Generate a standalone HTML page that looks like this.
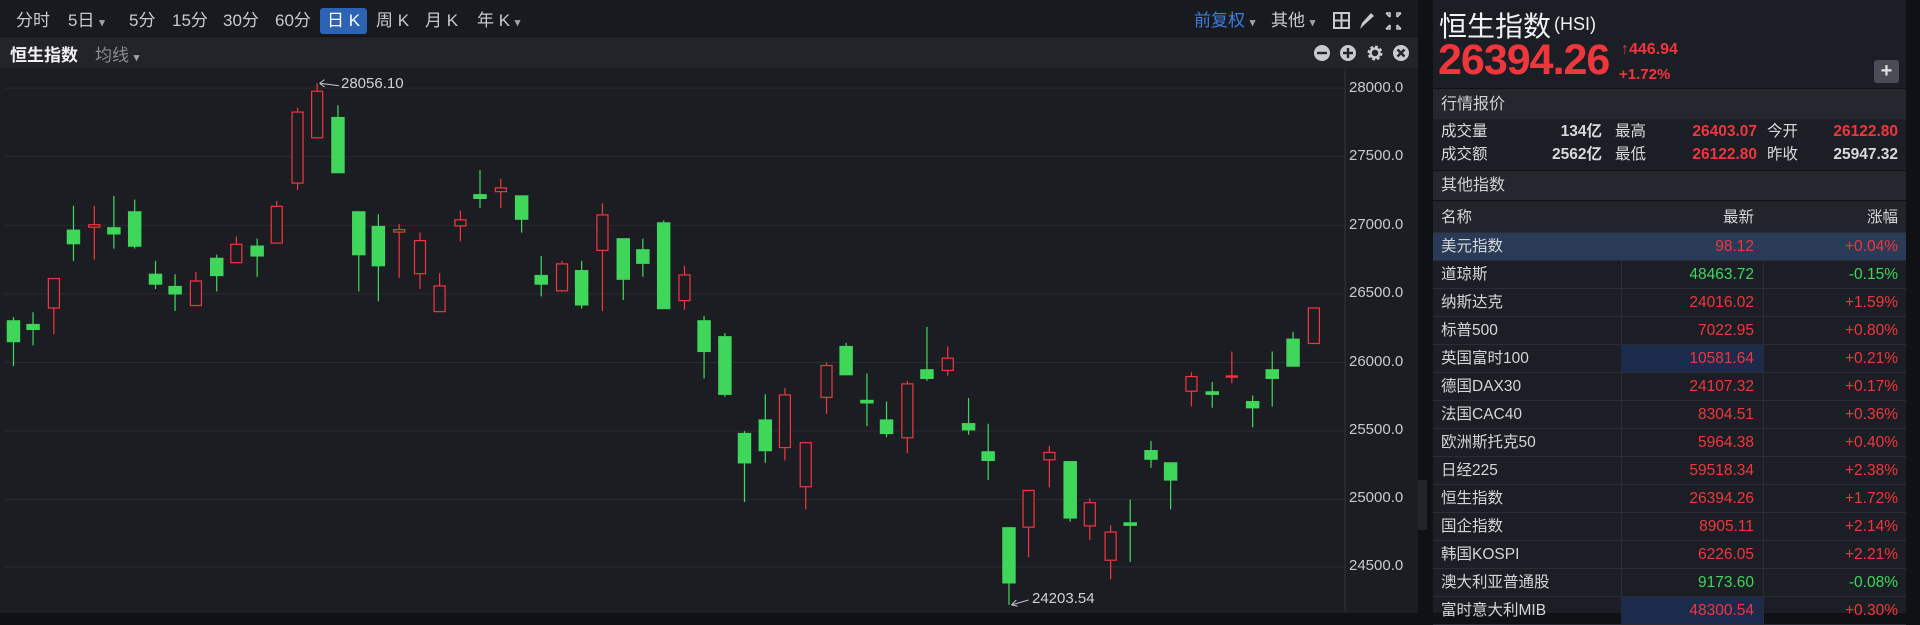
<!DOCTYPE html>
<html><head><meta charset="utf-8"><style>
*{margin:0;padding:0;box-sizing:border-box}
body{width:1920px;height:613px;background:#101114;overflow:hidden;position:relative;font-family:"Liberation Sans","Noto Sans CJK SC",sans-serif;color:#d8d9dc}
.abs{position:absolute}
#left{left:0;top:0;width:1418px;height:613px;background:#1b1d23}
#tb{left:0;top:0;width:1418px;height:37px;background:#191a1f;border-bottom:1px solid #111}
#tb span{position:absolute;top:8px;font-size:17px;color:#c9cace;line-height:26px}
#r2{left:0;top:37px;width:1418px;height:31px;background:#22242a}
.ar{font-size:11px;color:#a0a2a8}
.yl{position:absolute;left:1349px;font-size:15px;color:#c9cace}
#right{left:1433px;top:0;width:473px;height:613px;background:#1c1e25}
.sec{position:absolute;left:0;width:473px;background:#25272e;font-size:16px;color:#d0d1d4;padding-left:8px}
.row{position:absolute;left:0;width:473px;height:28px;border-bottom:1px solid #2b2d34;font-size:15.5px;line-height:28px}
.row .n{position:absolute;left:8px;color:#d4d5d8}
.row .v{position:absolute;right:152px;width:180px;text-align:right}
.row .c{position:absolute;right:8px;text-align:right}
.row .d1{position:absolute;left:188px;top:0;width:1px;height:28px;background:#2b2d34}
.row .d2{position:absolute;left:330px;top:0;width:1px;height:28px;background:#2b2d34}
.r{color:#f0363d}.g{color:#3fd65a}
</style></head><body>
<div id="left" class="abs"></div>
<div id="tb" class="abs">
<span style="left:16px">分时</span>
<span style="left:68px">5日 <b class="ar">▾</b></span>
<span style="left:129px">5分</span>
<span style="left:172px">15分</span>
<span style="left:223px">30分</span>
<span style="left:275px">60分</span>
<span style="left:320px;width:47px;height:26px;background:#2d63b5;border-radius:3px;text-align:center;color:#fff">日 K</span>
<span style="left:376px">周 K</span>
<span style="left:425px">月 K</span>
<span style="left:477px">年 K <b class="ar">▾</b></span>
<span style="left:1194px;color:#3b7ee0">前复权 <b class="ar">▾</b></span>
<span style="left:1271px">其他 <b class="ar">▾</b></span>
</div>
<svg class="abs" style="left:1332px;top:10px" width="84" height="22" viewBox="0 0 84 22">
<g fill="none" stroke="#c9cace" stroke-width="2"><rect x="2" y="3" width="15" height="15"/><path d="M9.5 3v15M2 10.5h15"/></g>
<path d="M28 19l2-6 9-10 3 3-10 9z" fill="#c9cace"/>
<g stroke="#c9cace" stroke-width="1.6" fill="none"><path d="M54 3h4v4M54 3l4 4M69 3h-4v4M69 3l-4 4M54 19h4v-4M54 19l4-4M69 19h-4v-4M69 19l-4-4"/></g>
</svg>
<div id="r2" class="abs">
<span class="abs" style="left:10px;top:4px;font-size:17px;font-weight:bold;color:#f2f2f2">恒生指数</span>
<span class="abs" style="left:95px;top:4px;font-size:17px;color:#8a8c92">均线 <b class="ar">▾</b></span>
<svg class="abs" style="left:1313px;top:7px" width="100" height="18" viewBox="0 0 100 18">
<circle cx="9" cy="9" r="8" fill="#c9cace"/><rect x="4" y="7.8" width="10" height="2.4" fill="#22242a"/>
<circle cx="35" cy="9" r="8" fill="#c9cace"/><path d="M30 9h10M35 4v10" stroke="#22242a" stroke-width="2.4"/>
<g transform="translate(62 9)"><circle r="5.5" fill="none" stroke="#c9cace" stroke-width="4" stroke-dasharray="2.5 1.8"/><circle r="4.5" fill="none" stroke="#c9cace" stroke-width="2.5"/></g>
<circle cx="88" cy="9" r="8" fill="#c9cace"/><path d="M84.5 5.5l7 7M91.5 5.5l-7 7" stroke="#22242a" stroke-width="2.4"/>
</svg>
</div>
<svg class="abs" style="left:0;top:0" width="1920" height="613" viewBox="0 0 1568 500.6" preserveAspectRatio="none">
<g stroke="#2a2c33" stroke-width="0.8">
<path d="M4 72H1098M4 128H1098M4 184H1098M4 240H1098M4 296H1098M4 352H1098M4 408H1098M4 463H1098"/>
</g>
<path d="M1098.5 56V500" stroke="#33353c" stroke-width="0.8"/>
<g stroke-width="1">
<g stroke="#3fd65a" fill="#3fd65a">
<path d="M11 259V299M27 255V282M60 168V213M93 160V203M110 163V203M127 213V236M143 224V254M177 208V238M210 195V226M276 86V141M293 173V238M309 175V246M392 139V170M426 160V190M442 209V242M475 213V252M509 195V245M525 195V226M542 180V252M575 258V309M592 272V324M608 352V410M625 322V378M691 280V306M708 305V348M724 328V357M757 267V311M791 325V355M807 346V392M824 431V494M874 377V426M923 408V459M940 360V382M956 378V416M990 312V333M1023 323V349M1039 287V332M1056 271V299"/>
<rect x="6" y="262" width="10" height="17"/><rect x="22" y="265" width="10" height="4"/><rect x="55" y="188" width="10" height="11"/><rect x="88" y="186" width="10" height="5"/><rect x="105" y="173" width="10" height="28"/><rect x="122" y="224" width="10" height="8"/><rect x="138" y="234" width="10" height="6"/><rect x="172" y="211" width="10" height="14"/><rect x="205" y="201" width="10" height="8"/><rect x="271" y="96" width="10" height="45"/><rect x="288" y="173" width="10" height="35"/><rect x="304" y="185" width="10" height="32"/><rect x="387" y="159" width="10" height="3"/><rect x="421" y="160" width="10" height="19"/><rect x="437" y="225" width="10" height="7"/><rect x="470" y="221" width="10" height="28"/><rect x="504" y="195" width="10" height="33"/><rect x="520" y="204" width="10" height="11"/><rect x="537" y="182" width="10" height="70"/><rect x="570" y="262" width="10" height="25"/><rect x="587" y="275" width="10" height="47"/><rect x="603" y="354" width="10" height="24"/><rect x="620" y="343" width="10" height="25"/><rect x="686" y="283" width="10" height="23"/><rect x="703" y="327" width="10" height="2"/><rect x="719" y="343" width="10" height="11"/><rect x="752" y="302" width="10" height="7"/><rect x="786" y="346" width="10" height="5"/><rect x="802" y="369" width="10" height="7"/><rect x="819" y="431" width="10" height="45"/><rect x="869" y="377" width="10" height="46"/><rect x="918" y="427" width="10" height="2"/><rect x="935" y="368" width="10" height="7"/><rect x="951" y="378" width="10" height="14"/><rect x="985" y="320" width="10" height="2"/><rect x="1018" y="328" width="10" height="5"/><rect x="1034" y="302" width="10" height="7"/><rect x="1051" y="277" width="10" height="22"/>
</g>
<g stroke="#f0363d" fill="#1b1d23">
<path d="M44 227V273M77 168V212M160 222V229M193 193V199M226 164V168M243 88V91M243 150V155M259 68V74M326 183V227M343 190V196M343 224V236M359 223V233M376 172V197M409 146V170M459 213V215M492 166V175M492 205V254M559 217V224M559 246V253M641 317V322M641 366V376M658 398V416M675 296V298M675 325V338M741 311V313M741 358V370M774 283V307M840 431V455M857 364V398M890 407V410M890 430V441M907 429V434M907 458V473M973 304V332M1006 287V313"/>
<rect x="39.5" y="227.5" width="9" height="24"/><rect x="72.5" y="183.5" width="9" height="2"/><rect x="155.5" y="229.5" width="9" height="20"/><rect x="188.5" y="199.5" width="9" height="15"/><rect x="221.5" y="168.5" width="9" height="30"/><rect x="238.5" y="91.5" width="9" height="58"/><rect x="254.5" y="74.5" width="9" height="38"/><rect x="321.5" y="187.5" width="9" height="2"/><rect x="338.5" y="196.5" width="9" height="27"/><rect x="354.5" y="233.5" width="9" height="21"/><rect x="371.5" y="179.5" width="9" height="5"/><rect x="404.5" y="153.5" width="9" height="3"/><rect x="454.5" y="215.5" width="9" height="22"/><rect x="487.5" y="175.5" width="9" height="29"/><rect x="554.5" y="224.5" width="9" height="21"/><rect x="636.5" y="322.5" width="9" height="43"/><rect x="653.5" y="361.5" width="9" height="36"/><rect x="670.5" y="298.5" width="9" height="26"/><rect x="736.5" y="313.5" width="9" height="44"/><rect x="769.5" y="292.5" width="9" height="10"/><rect x="835.5" y="400.5" width="9" height="30"/><rect x="852.5" y="369.5" width="9" height="6"/><rect x="885.5" y="410.5" width="9" height="19"/><rect x="902.5" y="434.5" width="9" height="23"/><rect x="968.5" y="307.5" width="9" height="12"/><rect x="1001.5" y="307" width="9" height="1"/><rect x="1068.5" y="251.5" width="9" height="29"/>
</g>
</g>
<path d="M261 68l16 2M261 68l4-3M261 68l4 3" stroke="#c9cace" stroke-width="0.8" fill="none"/>
<path d="M826 494l14-4M826 494l4-4M826 494l5 1" stroke="#c9cace" stroke-width="0.8" fill="none"/>
<path d="M1159 395l5 5-5 5z" fill="#c9cace"/>
</svg>
<span class="abs" style="left:341px;top:75px;font-size:15px;color:#d0d1d4">28056.10</span>
<span class="abs" style="left:1032px;top:590px;font-size:15px;color:#d0d1d4">24203.54</span>
<span class="yl" style="top:79px">28000.0</span>
<span class="yl" style="top:147px">27500.0</span>
<span class="yl" style="top:216px">27000.0</span>
<span class="yl" style="top:284px">26500.0</span>
<span class="yl" style="top:353px">26000.0</span>
<span class="yl" style="top:421px">25500.0</span>
<span class="yl" style="top:489px">25000.0</span>
<span class="yl" style="top:557px">24500.0</span>
<div class="abs" style="left:1418px;top:480px;width:9px;height:50px;background:#22242a"></div>

<div id="right" class="abs">
<span class="abs" style="left:6px;top:5px;font-size:28px;color:#f2f2f2">恒生指数</span>
<span class="abs" style="left:121px;top:14px;font-size:18px;color:#f2f2f2">(HSI)</span>
<span class="abs" style="left:5px;top:36px;font-size:43px;font-weight:bold;color:#f0363d;letter-spacing:-1px">26394.26</span>
<span class="abs" style="left:188px;top:41px;font-size:16px;font-weight:bold;color:#f0363d">↑446.94</span>
<span class="abs" style="left:186px;top:66px;font-size:15px;font-weight:bold;color:#f0363d">+1.72%</span>
<div class="abs" style="left:441px;top:60px;width:25px;height:23px;background:#4a4d55;border-radius:3px;color:#e0e0e0;text-align:center;font-size:20px;line-height:22px;font-weight:bold">+</div>
<div class="sec" style="top:88px;height:31px;line-height:31px;border-top:1px solid #111">行情报价</div>
<div class="abs" style="left:0;top:120px;width:473px;height:50px;font-size:15.5px;line-height:23px">
<span class="abs" style="left:8px;top:0">成交量</span><span class="abs" style="left:90px;width:79px;text-align:right;top:0;font-weight:bold">134亿</span>
<span class="abs" style="left:8px;top:23px">成交额</span><span class="abs" style="left:90px;width:79px;text-align:right;top:23px;font-weight:bold">2562亿</span>
<span class="abs" style="left:182px;top:0">最高</span><span class="abs r" style="left:230px;width:94px;text-align:right;top:0;font-weight:bold">26403.07</span>
<span class="abs" style="left:182px;top:23px">最低</span><span class="abs r" style="left:230px;width:94px;text-align:right;top:23px;font-weight:bold">26122.80</span>
<span class="abs" style="left:334px;top:0">今开</span><span class="abs r" style="left:360px;width:105px;text-align:right;top:0;font-weight:bold">26122.80</span>
<span class="abs" style="left:334px;top:23px">昨收</span><span class="abs" style="left:360px;width:105px;text-align:right;top:23px;font-weight:bold">25947.32</span>
</div>
<div class="sec" style="top:170px;height:30px;line-height:30px;border-top:1px solid #111">其他指数</div>
<div class="row" style="top:200px;height:33px;line-height:33px;background:#22242b;border-top:1px solid #111"><span class="n">名称</span><span class="v" style="color:#d4d5d8">最新</span><span class="c" style="color:#d4d5d8">涨幅</span></div>
<div class="row" style="top:233px;background:#2a3b57"><span class="n">美元指数</span><span class="v r">98.12</span><span class="c r">+0.04%</span></div>
<div class="row" style="top:261px"><i class="d1"></i><i class="d2"></i><span class="n">道琼斯</span><span class="v g">48463.72</span><span class="c g">-0.15%</span></div>
<div class="row" style="top:289px"><i class="d1"></i><i class="d2"></i><span class="n">纳斯达克</span><span class="v r">24016.02</span><span class="c r">+1.59%</span></div>
<div class="row" style="top:317px"><i class="d1"></i><i class="d2"></i><span class="n">标普500</span><span class="v r">7022.95</span><span class="c r">+0.80%</span></div>
<div class="row" style="top:345px"><i class="d1"></i><i class="d2"></i><div class="abs" style="left:188px;top:0;width:142px;height:27px;background:#1c2a4c"></div><span class="n">英国富时100</span><span class="v r">10581.64</span><span class="c r">+0.21%</span></div>
<div class="row" style="top:373px"><i class="d1"></i><i class="d2"></i><span class="n">德国DAX30</span><span class="v r">24107.32</span><span class="c r">+0.17%</span></div>
<div class="row" style="top:401px"><i class="d1"></i><i class="d2"></i><span class="n">法国CAC40</span><span class="v r">8304.51</span><span class="c r">+0.36%</span></div>
<div class="row" style="top:429px"><i class="d1"></i><i class="d2"></i><span class="n">欧洲斯托克50</span><span class="v r">5964.38</span><span class="c r">+0.40%</span></div>
<div class="row" style="top:457px"><i class="d1"></i><i class="d2"></i><span class="n">日经225</span><span class="v r">59518.34</span><span class="c r">+2.38%</span></div>
<div class="row" style="top:485px"><i class="d1"></i><i class="d2"></i><span class="n">恒生指数</span><span class="v r">26394.26</span><span class="c r">+1.72%</span></div>
<div class="row" style="top:513px"><i class="d1"></i><i class="d2"></i><span class="n">国企指数</span><span class="v r">8905.11</span><span class="c r">+2.14%</span></div>
<div class="row" style="top:541px"><i class="d1"></i><i class="d2"></i><span class="n">韩国KOSPI</span><span class="v r">6226.05</span><span class="c r">+2.21%</span></div>
<div class="row" style="top:569px"><i class="d1"></i><i class="d2"></i><span class="n">澳大利亚普通股</span><span class="v g">9173.60</span><span class="c g">-0.08%</span></div>
<div class="row" style="top:597px"><i class="d1"></i><i class="d2"></i><div class="abs" style="left:188px;top:0;width:142px;height:27px;background:#1c2a4c"></div><span class="n">富时意大利MIB</span><span class="v r">48300.54</span><span class="c r">+0.30%</span></div>
</div>
</body></html>
